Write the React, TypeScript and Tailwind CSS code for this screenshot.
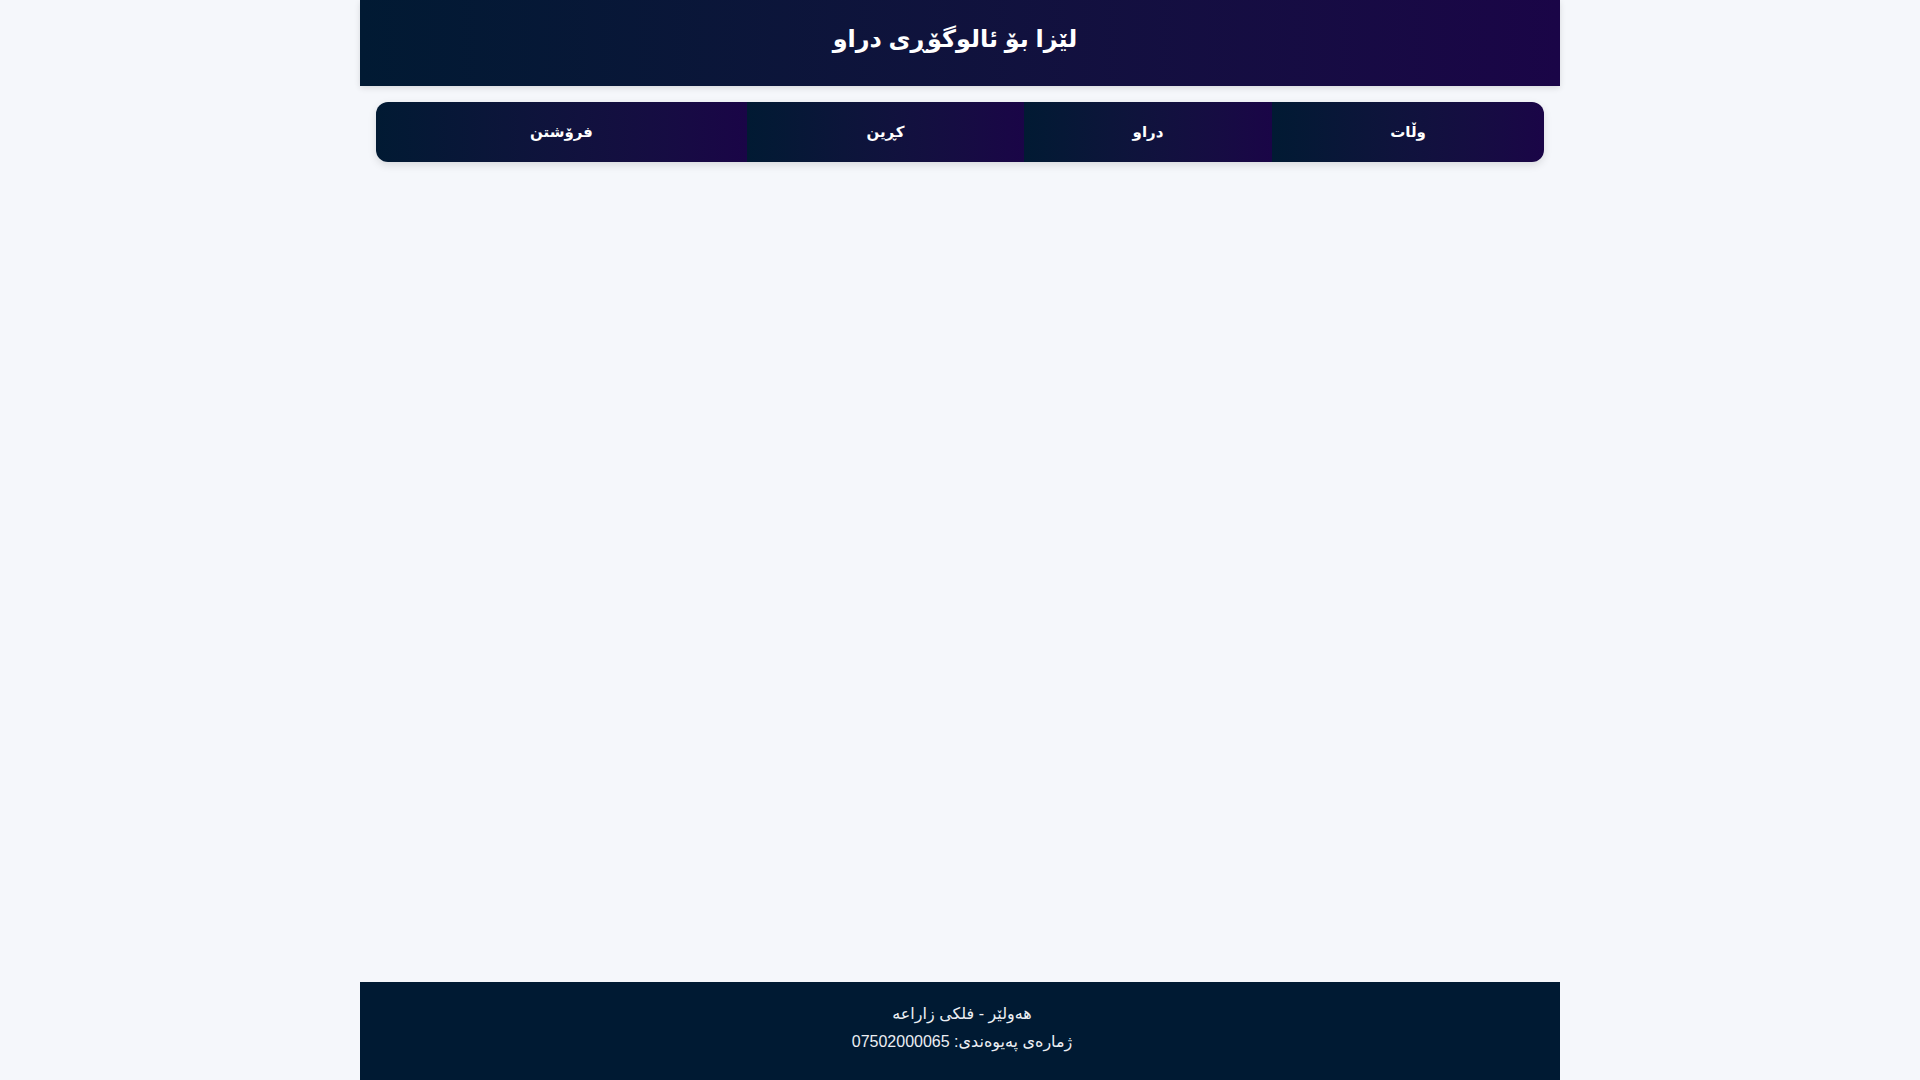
import React from 'react'

const tabs = [
  { label: 'وڵات', width: 'w-[272px]' },
  { label: 'دراو', width: 'w-[248px]' },
  { label: 'کڕین', width: 'w-[277px]' },
  { label: 'فرۆشتن', width: 'flex-1' },
]

export default function App() {
  return (
    <div
      dir="rtl"
      className="min-h-screen bg-[#f5f7fb] font-['Liberation_Sans','DejaVu_Sans',sans-serif]"
    >
      <div className="mx-auto flex min-h-screen w-[1200px] flex-col">
        <header className="relative z-10 flex h-[86px] justify-center bg-linear-to-r from-[#011a33] to-[#1a0547] pt-[20px] pr-[10px] shadow-[0_2px_6px_rgba(0,0,0,0.12)]">
          <h1 className="text-[24px] font-bold leading-[38px] text-white">
            لێزا بۆ ئالوگۆڕی دراو
          </h1>
        </header>

        <main className="flex-1 px-4 pt-4">
          <nav className="flex h-[60px] overflow-hidden rounded-xl shadow-[0_3px_8px_rgba(0,0,0,0.12)]">
            {tabs.map((t) => (
              <button
                key={t.label}
                className={`${t.width} flex items-center justify-center bg-linear-to-r from-[#011a33] to-[#1a0547] text-[15px] font-bold text-white`}
              >
                {t.label}
              </button>
            ))}
          </nav>
        </main>

        <footer className="flex h-[98px] flex-col items-center bg-[#001a33] pt-[20px] pl-[4px] text-[16px] leading-[24px] text-[#eceff3]">
          <p>هەولێر - فلکی زاراعه</p>
          <p className="mt-[4px]">ژمارەی پەیوەندی: 07502000065</p>
        </footer>
      </div>
    </div>
  )
}
